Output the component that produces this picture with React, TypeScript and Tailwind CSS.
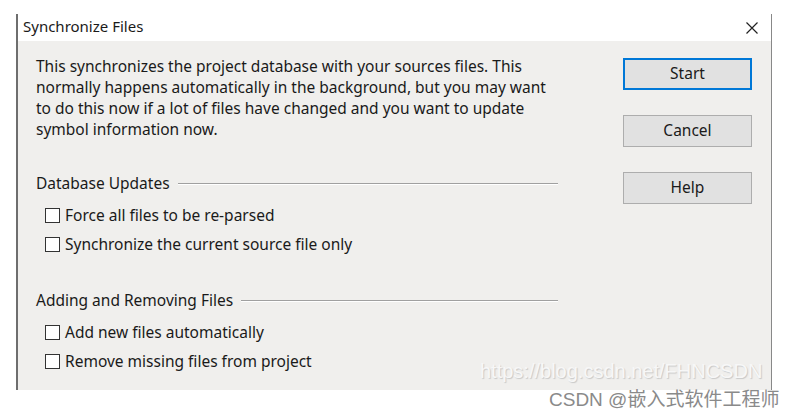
import React from "react";

const font = { fontFamily: '"Noto Sans", "Liberation Sans", sans-serif' };

const Checkbox = ({ label }: { label: string }) => (
  <label className="flex items-center h-[29px] pl-[9px]">
    <span className="w-[15px] h-[15px] border border-[#333333] bg-white mr-[5px]" />
    <span className="text-[15.5px] text-[#1a1a1a]">{label}</span>
  </label>
);

const GroupHeader = ({ title }: { title: string }) => (
  <div className="flex items-center h-[20px]">
    <span className="text-[15.5px] text-[#1a1a1a] mr-[8px]">{title}</span>
    <div className="flex-1 border-t border-[#a0a0a0] border-b border-b-white" />
  </div>
);

const DialogButton = ({ label, primary }: { label: string; primary?: boolean }) => (
  <button
    className={
      "w-[129px] h-[32px] bg-[#e1e1e1] text-[15.5px] text-[#1a1a1a] " +
      (primary ? "border-2 border-[#0078d7]" : "border border-[#adadad]")
    }
  >
    {label}
  </button>
);

export default function App() {
  return (
    <div className="w-[795px] h-[418px] bg-white relative overflow-hidden" style={font}>
      <div className="pt-[14px] pl-[16px]">
        <div className="w-[756px] h-[376px] flex flex-col border-l-2 border-l-[#6e6e6e] border-r border-r-[#888888]">
          {/* title bar */}
          <div className="h-[27px] bg-white flex items-center justify-between pl-[5px] pr-[13px]">
            <span className="text-[15px] text-[#1a1a1a] -mt-[2px]">Synchronize Files</span>
            <svg width="12" height="12" viewBox="0 0 12 12">
              <path d="M0.5 0.5 L11.5 11.5 M11.5 0.5 L0.5 11.5" stroke="#222" strokeWidth="1.2" />
            </svg>
          </div>
          {/* body */}
          <div className="flex-1 bg-[#f0efed] flex">
            <div className="w-[540px] pl-[18px] pt-[15px]">
              <div className="text-[15.5px] leading-[21px] text-[#1a1a1a]">
                <div>This synchronizes the project database with your sources files. This</div>
                <div>normally happens automatically in the background, but you may want</div>
                <div>to do this now if a lot of files have changed and you want to update</div>
                <div>symbol information now.</div>
              </div>
              <div className="mt-[34px]">
                <GroupHeader title="Database Updates" />
                <div className="mt-[7px]">
                  <Checkbox label="Force all files to be re-parsed" />
                  <Checkbox label="Synchronize the current source file only" />
                </div>
              </div>
              <div className="mt-[32px]">
                <GroupHeader title="Adding and Removing Files" />
                <div className="mt-[7px]">
                  <Checkbox label="Add new files automatically" />
                  <Checkbox label="Remove missing files from project" />
                </div>
              </div>
            </div>
            <div className="flex flex-col gap-[25px] pl-[65px] pt-[17px]">
              <DialogButton label="Start" primary />
              <DialogButton label="Cancel" />
              <DialogButton label="Help" />
            </div>
          </div>
        </div>
      </div>
      {/* watermarks */}
      <div
        className="absolute left-[480px] top-[356px] text-[20px] text-[#f7f7f7]"
        style={{ fontFamily: '"Liberation Sans", sans-serif', textShadow: "1px 1px 1px #c8c8c8" }}
      >
        https://blog.csdn.net/FHNCSDN
      </div>
      <div
        className="absolute left-[549px] top-[386px] text-[19px] text-[#8a8a8a]"
        style={{ fontFamily: '"Liberation Sans", "Noto Sans CJK SC", sans-serif' }}
      >
        CSDN @嵌入式软件工程师
      </div>
    </div>
  );
}
